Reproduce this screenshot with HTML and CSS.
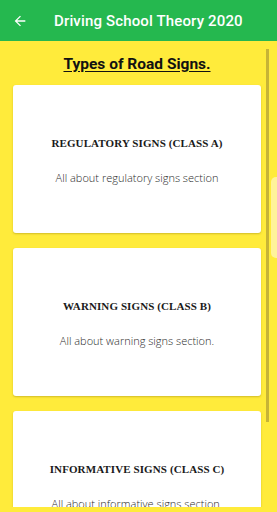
FILE: index.html
```html
<!DOCTYPE html>
<html lang="en">
<head>
    <meta charset="UTF-8">
    <meta name="viewport" content="width=device-width, initial-scale=1.0">
    <title>Driving School Theory 2020</title>
    <link rel="stylesheet" href="styles.css">
</head>
<body>
    <div class="app-bar">
        <span class="back-btn">
            <svg width="16" height="16" viewBox="0 0 24 24"><path d="M20 11H7.83l5.59-5.59L12 4l-8 8 8 8 1.41-1.41L7.83 13H20v-2z" fill="#fff"/></svg>
        </span>
        <div class="app-title">Driving School Theory 2020</div>
    </div>

    <div class="page">
        <div class="section-title">Types of Road Signs.</div>
        <div class="card-list">
            <div class="sign-card">
                <div class="card-title">REGULATORY SIGNS (CLASS A)</div>
                <div class="card-desc">All about regulatory signs section</div>
            </div>
            <div class="sign-card">
                <div class="card-title">WARNING SIGNS (CLASS B)</div>
                <div class="card-desc">All about warning signs section.</div>
            </div>
            <div class="sign-card">
                <div class="card-title">INFORMATIVE SIGNS (CLASS C)</div>
                <div class="card-desc">All about informative signs section.</div>
            </div>
        </div>
        <div class="scroll-thumb"></div>
    </div>
    <div class="edge-handle"></div>
</body>
</html>
```

FILE: styles.css
```css
body {
    margin: 0;
    height: 512px;
    overflow: hidden;
    background: #ffeb3b;
    font-family: Roboto, 'Noto Sans', Arial, sans-serif;
    position: relative;
}
.app-bar {
    height: 41px;
    background: #25b84f;
    display: flex;
    align-items: center;
    color: #fff;
}
.back-btn {
    width: 54px;
    display: flex;
    align-items: center;
    padding-left: 12px;
    box-sizing: border-box;
}
.back-btn svg { display: block; }
.app-title {
    font-size: 15px;
    font-weight: 500;
    letter-spacing: 0.15px;
}
.page {
    height: 466px;
    overflow: hidden;
    position: relative;
    padding: 0 16px 0 13px;
}
.section-title {
    height: 44px;
    display: flex;
    align-items: center;
    justify-content: center;
    font-size: 15.5px;
    font-weight: 700;
    color: #111;
    text-decoration: underline;
    text-underline-offset: 2px;
    padding-top: 1px;
    box-sizing: border-box;
}
.card-list {
    display: flex;
    flex-direction: column;
    gap: 15px;
}
.sign-card {
    height: 148px;
    flex-shrink: 0;
    background: #fff;
    border-radius: 3px;
    box-shadow: 0 1px 2px rgba(120,100,0,0.35);
    display: flex;
    flex-direction: column;
    align-items: center;
    padding-top: 51px;
    box-sizing: border-box;
}
.card-title {
    font-family: 'Liberation Serif', 'DejaVu Serif', serif;
    font-weight: 700;
    font-size: 11px;
    color: #1a1a1a;
    height: 14px;
    line-height: 14px;
    letter-spacing: 0.1px;
}
.card-desc {
    margin-top: 20px;
    font-family: 'Open Sans', sans-serif;
    font-weight: 300;
    font-size: 11px;
    color: #2a2a2a;
}
.scroll-thumb {
    position: absolute;
    right: 8px;
    top: 8px;
    width: 3px;
    height: 373px;
    background: #c7b436;
}
.edge-handle {
    position: absolute;
    right: 0;
    top: 177px;
    width: 6px;
    height: 81px;
    background: #fff39a;
    border-radius: 5px 0 0 5px;
}
```
